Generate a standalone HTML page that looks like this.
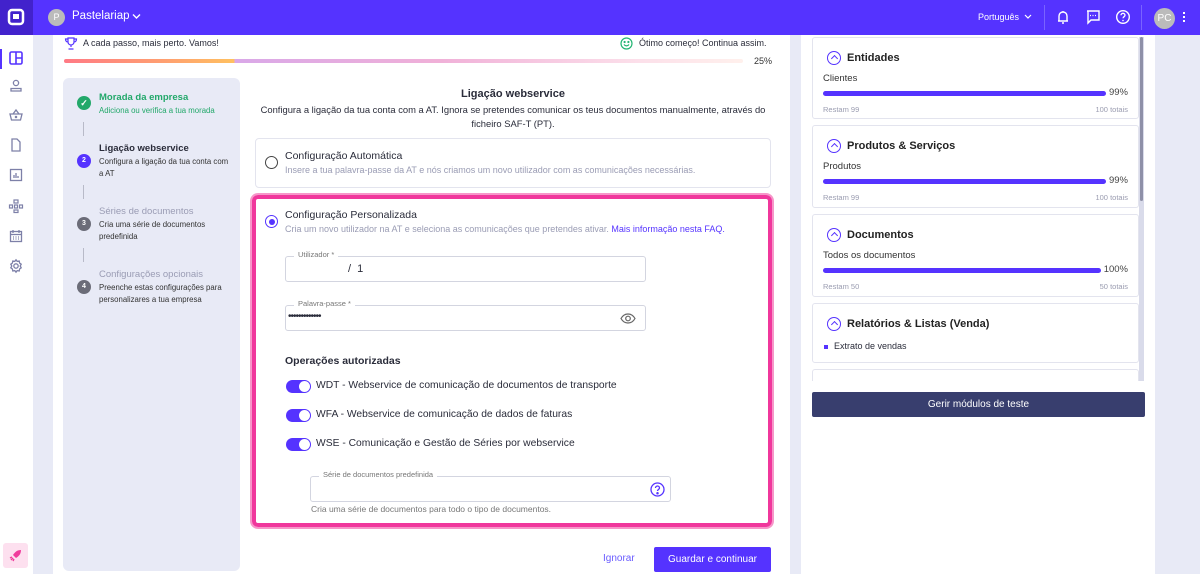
<!DOCTYPE html>
<html><head><meta charset="utf-8"><style>
*{box-sizing:border-box;margin:0;padding:0}
body{width:1200px;height:574px;overflow:hidden;background:#e8eaf6;font-family:"Liberation Sans",sans-serif;color:#2a2c3a;position:relative;font-size:11px}
.abs{position:absolute}
.top{left:0;top:0;width:1200px;height:35px;background:#5533ff}
.logo{left:0;top:0;width:33px;height:35px;background:#4222cc}
.side{left:0;top:35px;width:33px;height:539px;background:#fff}
.main{left:53px;top:35px;width:737px;height:539px;background:#fff}
.rp{left:801px;top:35px;width:354px;height:539px;background:#fff}
.steps{left:63px;top:78px;width:177px;height:493px;background:#e8eaf6;border-radius:6px}
.card{background:#fff;border:1px solid #e3e4ee;border-radius:4px}
.rc{left:812px;width:327px;border:1px solid #e3e4ee;border-radius:3px;background:#fff}
.rc h4{position:absolute;left:34px;top:14px;font-size:11px;font-weight:bold;color:#222}
.rc .ci{position:absolute;left:14px;top:13px;width:14px;height:14px;border:1.6px solid #5533ff;border-radius:50%}
.rc .ci:after{content:"";position:absolute;left:3.5px;top:4px;width:4px;height:4px;border-left:1.5px solid #5533ff;border-top:1.5px solid #5533ff;transform:rotate(45deg)}
.lbl{position:absolute;left:10px;top:35px;font-size:9.5px;color:#333}
.bar{position:absolute;left:10px;top:53px;width:283px;height:5px;border-radius:3px;background:#5533ff}
.pct{position:absolute;right:10px;top:49px;font-size:9.5px;color:#444}
.rl{position:absolute;left:10px;top:67px;font-size:7.5px;color:#9a9cb0}
.rr{position:absolute;right:10px;top:67px;font-size:7.5px;color:#9a9cb0}
.tog{position:absolute;left:286px;width:25px;height:13px;border-radius:7px;background:#5533ff}
.tog:after{content:"";position:absolute;right:1px;top:1px;width:11px;height:11px;border-radius:50%;background:#fff}
.tl{position:absolute;left:316px;font-size:10.3px;color:#2a2c3a}
.fld{position:absolute;border:1px solid #d3d5e0;border-radius:3px;background:#fff}
.fl{position:absolute;top:-7px;left:8px;background:#fff;padding:0 4px;font-size:7.5px;color:#777}
.sc{position:absolute;left:77px;width:14px;height:14px;border-radius:50%;color:#fff;font-size:7px;text-align:center;line-height:14px;font-weight:bold}
.st{position:absolute;left:99px;font-size:9.5px;font-weight:bold}
.ss{position:absolute;left:99px;font-size:7.8px;line-height:12px;color:#333;width:135px}
.vl{position:absolute;left:83px;width:1px;height:14px;background:#b8bac8}
</style></head><body>
<div class="abs top"></div>
<div class="abs logo"><svg width="33" height="35"><rect x="9" y="10" width="14" height="14" rx="3" fill="none" stroke="#fff" stroke-width="2.5"/><rect x="13" y="14" width="6" height="5" fill="#fff"/></svg></div>
<div class="abs" style="left:48px;top:9px;width:17px;height:17px;border-radius:50%;background:#bbb;color:#fff;font-size:9px;text-align:center;line-height:17px">P</div>
<div class="abs" style="left:72px;top:10px;color:#fff;font-size:11.5px">Pastelariap</div>
<svg class="abs" style="left:132px;top:13px" width="9" height="7"><path d="M1 1.5l3.5 3.5 3.5-3.5" stroke="#fff" stroke-width="1.4" fill="none"/></svg>
<div class="abs" style="left:978px;top:12px;color:#fff;font-size:9px">Português</div>
<svg class="abs" style="left:1024px;top:14px" width="8" height="6"><path d="M1 1l3 3 3-3" stroke="#fff" stroke-width="1.2" fill="none"/></svg>
<div class="abs" style="left:1044px;top:5px;width:1px;height:25px;background:#7a63ff"></div>
<svg class="abs" style="left:1055px;top:9px" width="16" height="16"><path d="M4 12V7a4 4 0 018 0v5zM3 12h10M7 14h2M8 2v1" stroke="#fff" stroke-width="1.4" fill="none"/></svg>
<svg class="abs" style="left:1085px;top:9px" width="16" height="16"><path d="M2 2h12v9H6l-3 3V2z" stroke="#fff" stroke-width="1.4" fill="none"/><path d="M5 6.5h1M7.5 6.5h1M10 6.5h1" stroke="#fff" stroke-width="1.2"/></svg>
<svg class="abs" style="left:1115px;top:9px" width="16" height="16"><circle cx="8" cy="8" r="6.3" stroke="#fff" stroke-width="1.4" fill="none"/><path d="M6 6.3a2 2 0 114 0c0 1.3-2 1.5-2 3" stroke="#fff" stroke-width="1.3" fill="none"/><circle cx="8" cy="11.5" r=".8" fill="#fff"/></svg>
<div class="abs" style="left:1141px;top:5px;width:1px;height:25px;background:#7a63ff"></div>
<div class="abs" style="left:1154px;top:8px;width:21px;height:21px;border-radius:50%;background:#bbb;color:#fff;font-size:10px;text-align:center;line-height:21px">PC</div>
<div class="abs" style="left:1183px;top:12px;width:2px;height:2px;background:#fff;box-shadow:0 4px #fff,0 8px #fff"></div>

<div class="abs side"></div>
<div class="abs" style="left:0;top:49px;width:2px;height:20px;background:#5533ff"></div>
<svg class="abs" style="left:8px;top:50px" width="16" height="16"><rect x="2" y="2" width="12" height="12" rx="1.5" stroke="#5533ff" stroke-width="1.6" fill="none"/><path d="M8 2v12M8 8h6" stroke="#5533ff" stroke-width="1.6"/></svg>
<svg class="abs" style="left:8px;top:78px" width="16" height="16" fill="none" stroke="#7d80a8" stroke-width="1.3"><circle cx="8" cy="5" r="2.6"/><path d="M3 13v-2.5h10V13z"/></svg>
<svg class="abs" style="left:8px;top:107px" width="16" height="16" fill="none" stroke="#7d80a8" stroke-width="1.3"><path d="M2 7h12l-1.5 6h-9zM5 7l3-4 3 4"/><circle cx="8" cy="10" r=".6"/></svg>
<svg class="abs" style="left:8px;top:137px" width="16" height="16" fill="none" stroke="#7d80a8" stroke-width="1.3"><path d="M4 2h5l3 3v9H4z"/></svg>
<svg class="abs" style="left:8px;top:167px" width="16" height="16" fill="none" stroke="#7d80a8" stroke-width="1.3"><rect x="2.5" y="2.5" width="11" height="11"/><path d="M6 11V8M8 11V6M10 11V9"/></svg>
<svg class="abs" style="left:8px;top:198px" width="16" height="16" fill="none" stroke="#7d80a8" stroke-width="1.2"><rect x="6" y="2" width="4" height="3"/><rect x="1.5" y="7" width="3" height="3"/><rect x="6.5" y="7" width="3" height="3"/><rect x="11.5" y="7" width="3" height="3"/><rect x="6" y="12" width="4" height="2.5"/></svg>
<svg class="abs" style="left:8px;top:228px" width="16" height="16" fill="none" stroke="#7d80a8" stroke-width="1.3"><rect x="2.5" y="3.5" width="11" height="10"/><path d="M2.5 6.5h11M5 2v3M11 2v3" /><path d="M5 9h1M7.5 9h1M10 9h1M5 11h1M7.5 11h1M10 11h1"/></svg>
<svg class="abs" style="left:8px;top:258px" width="16" height="16" fill="none" stroke="#7d80a8" stroke-width="1.3"><circle cx="8" cy="8" r="2.2"/><path d="M8 1.8l1.2 1.6 2-.4.4 2 1.6 1.2-1 1.8 1 1.8-1.6 1.2-.4 2-2-.4L8 14.2l-1.2-1.6-2 .4-.4-2L2.8 9.8l1-1.8-1-1.8 1.6-1.2.4-2 2 .4z"/></svg>
<div class="abs" style="left:3px;top:543px;width:25px;height:25px;border-radius:3px;background:#fde0ef"></div>
<svg class="abs" style="left:8px;top:548px" width="15" height="15"><path d="M13 2c-4 0-6 2-8 5l3 3c3-2 5-4 5-8z" fill="#f03c9c"/><path d="M3 12l2-2M2 10l2-1M5 13l1-2" stroke="#f03c9c" stroke-width="1.4"/></svg>

<div class="abs main"></div>
<svg class="abs" style="left:64px;top:37px" width="14" height="13" fill="none" stroke="#5533ff" stroke-width="1.2"><path d="M4 1h6v4a3 3 0 01-6 0zM4 2H1.5c0 2 1 3 2.5 3M10 2h2.5c0 2-1 3-2.5 3M7 8v2M4.5 12h5"/></svg>
<div class="abs" style="left:83px;top:38px;font-size:9px;color:#2a2c3a">A cada passo, mais perto. Vamos!</div>
<svg class="abs" style="left:620px;top:37px" width="13" height="13" fill="none" stroke="#22b573" stroke-width="1.2"><circle cx="6.5" cy="6.5" r="5.5"/><path d="M4 7.5c1.4 1.8 3.6 1.8 5 0"/><circle cx="4.6" cy="5" r=".5"/><circle cx="8.4" cy="5" r=".5"/></svg>
<div class="abs" style="left:639px;top:38px;font-size:9px;color:#2a2c3a">Ótimo começo! Continua assim.</div>
<div class="abs" style="left:64px;top:59px;width:679px;height:4px;border-radius:2px;background:linear-gradient(90deg,#ff7a85 0%,#ffa070 15%,#ffc060 25%,#d9a8e8 25.2%,#f0b0d8 55%,#fce0ea 85%,#fff0ec 100%)"></div>
<div class="abs" style="left:754px;top:56px;font-size:9px;color:#333">25%</div>

<div class="abs steps"></div>
<div class="sc" style="top:96px;background:#22a86a;font-size:9px">✓</div>
<div class="st" style="top:92px;color:#22a86a">Morada da empresa</div>
<div class="ss" style="top:105px;color:#22a86a">Adiciona ou verifica a tua morada</div>
<div class="vl" style="top:122px"></div>
<div class="sc" style="top:154px;background:#5533ff">2</div>
<div class="st" style="top:143px;color:#2a2c3a">Ligação webservice</div>
<div class="ss" style="top:156px">Configura a ligação da tua conta com a AT</div>
<div class="vl" style="top:185px"></div>
<div class="sc" style="top:217px;background:#6b6c78">3</div>
<div class="st" style="top:206px;color:#9a9cb4;font-weight:normal">Séries de documentos</div>
<div class="ss" style="top:219px">Cria uma série de documentos predefinida</div>
<div class="vl" style="top:248px"></div>
<div class="sc" style="top:280px;background:#6b6c78">4</div>
<div class="st" style="top:269px;color:#9a9cb4;font-weight:normal">Configurações opcionais</div>
<div class="ss" style="top:282px">Preenche estas configurações para personalizares a tua empresa</div>

<div class="abs" style="left:255px;top:88px;width:516px;text-align:center;font-size:11px;font-weight:bold">Ligação webservice</div>
<div class="abs" style="left:255px;top:103px;width:516px;text-align:center;font-size:9.4px;line-height:14px">Configura a ligação da tua conta com a AT. Ignora se pretendes comunicar os teus documentos manualmente, através do ficheiro SAF-T (PT).</div>

<div class="abs card" style="left:255px;top:138px;width:516px;height:50px"></div>
<div class="abs" style="left:265px;top:156px;width:13px;height:13px;border:1.5px solid #444;border-radius:50%"></div>
<div class="abs" style="left:285px;top:150px;font-size:10.5px">Configuração Automática</div>
<div class="abs" style="left:285px;top:165px;font-size:9px;color:#9a9cb4">Insere a tua palavra-passe da AT e nós criamos um novo utilizador com as comunicações necessárias.</div>

<div class="abs" style="left:250px;top:193px;width:524px;height:336px;border:2px solid #f796c9;border-radius:8px"></div>
<div class="abs" style="left:252px;top:195px;width:520px;height:332px;border:4px solid #f0379c;border-radius:6px;background:#fff"></div>
<div class="abs" style="left:265px;top:215px;width:13px;height:13px;border:1.5px solid #5533ff;border-radius:50%"></div>
<div class="abs" style="left:268.5px;top:218.5px;width:6px;height:6px;background:#5533ff;border-radius:50%"></div>
<div class="abs" style="left:285px;top:209px;font-size:10.5px">Configuração Personalizada</div>
<div class="abs" style="left:285px;top:224px;font-size:9px;color:#9a9cb4">Cria um novo utilizador na AT e seleciona as comunicações que pretendes ativar. <span style="color:#5533ff">Mais informação nesta FAQ.</span></div>

<div class="fld" style="left:285px;top:256px;width:361px;height:26px"><span class="fl">Utilizador *</span><span style="position:absolute;left:62px;top:6px;font-size:11px">/&nbsp; 1</span></div>
<div class="fld" style="left:285px;top:305px;width:361px;height:26px"><span class="fl">Palavra-passe *</span><span style="position:absolute;left:2px;top:5px;font-size:10px;letter-spacing:-1px">•••••••••••••</span>
<svg style="position:absolute;right:9px;top:6px" width="16" height="13" fill="none" stroke="#666" stroke-width="1.2"><path d="M1 6.5C3 3 5.5 2 8 2s5 1 7 4.5C13 10 10.5 11 8 11S3 10 1 6.5z"/><circle cx="8" cy="6.5" r="2.3"/></svg></div>

<div class="abs" style="left:285px;top:355px;font-size:10.5px;font-weight:bold">Operações autorizadas</div>
<div class="tog" style="top:380px"></div><div class="tl" style="top:380px">WDT - Webservice de comunicação de documentos de transporte</div>
<div class="tog" style="top:409px"></div><div class="tl" style="top:409px">WFA - Webservice de comunicação de dados de faturas</div>
<div class="tog" style="top:438px"></div><div class="tl" style="top:438px">WSE - Comunicação e Gestão de Séries por webservice</div>

<div class="fld" style="left:310px;top:476px;width:361px;height:26px"><span class="fl">Série de documentos predefinida</span>
<svg style="position:absolute;right:5px;top:5px" width="15" height="15" fill="none" stroke="#5533ff" stroke-width="1.3"><circle cx="7.5" cy="7.5" r="6.5"/><path d="M5.5 6a2 2 0 114 0c0 1.3-2 1.5-2 3"/><circle cx="7.5" cy="11.2" r=".6" fill="#5533ff"/></svg></div>
<div class="abs" style="left:311px;top:504px;font-size:8.5px;color:#777">Cria uma série de documentos para todo o tipo de documentos.</div>

<div class="abs" style="left:603px;top:553px;font-size:10px;color:#6a5cff">Ignorar</div>
<div class="abs" style="left:654px;top:547px;width:117px;height:25px;background:#5533ff;border-radius:2px;color:#fff;font-size:10px;text-align:center;line-height:25px">Guardar e continuar</div>

<div class="abs rp"></div>
<div class="abs" style="left:1139px;top:37px;width:5px;height:344px;background:#d9dbea"></div>
<div class="abs" style="left:1140px;top:37px;width:3px;height:164px;background:#8e90a8;border-radius:2px"></div>
<div class="abs rc" style="top:37px;height:82px"><div class="ci"></div><h4>Entidades</h4><div class="lbl">Clientes</div><div class="bar"></div><div class="pct">99%</div><div class="rl">Restam 99</div><div class="rr">100 totais</div></div>
<div class="abs rc" style="top:125px;height:83px"><div class="ci"></div><h4>Produtos &amp; Serviços</h4><div class="lbl">Produtos</div><div class="bar"></div><div class="pct">99%</div><div class="rl">Restam 99</div><div class="rr">100 totais</div></div>
<div class="abs rc" style="top:214px;height:83px"><div class="ci"></div><h4>Documentos</h4><div class="lbl">Todos os documentos</div><div class="bar" style="width:278px"></div><div class="pct">100%</div><div class="rl">Restam 50</div><div class="rr">50 totais</div></div>
<div class="abs rc" style="top:303px;height:60px"><div class="ci"></div><h4>Relatórios &amp; Listas (Venda)</h4><div style="position:absolute;left:11px;top:41px;width:4px;height:4px;background:#5533ff"></div><div style="position:absolute;left:21px;top:37px;font-size:9px">Extrato de vendas</div></div>
<div class="abs rc" style="top:369px;height:12px;border-bottom:none;border-radius:3px 3px 0 0"></div>
<div class="abs" style="left:812px;top:392px;width:333px;height:25px;background:#383e6e;border-radius:2px;color:#fff;font-size:10px;text-align:center;line-height:25px">Gerir módulos de teste</div>
</body></html>
